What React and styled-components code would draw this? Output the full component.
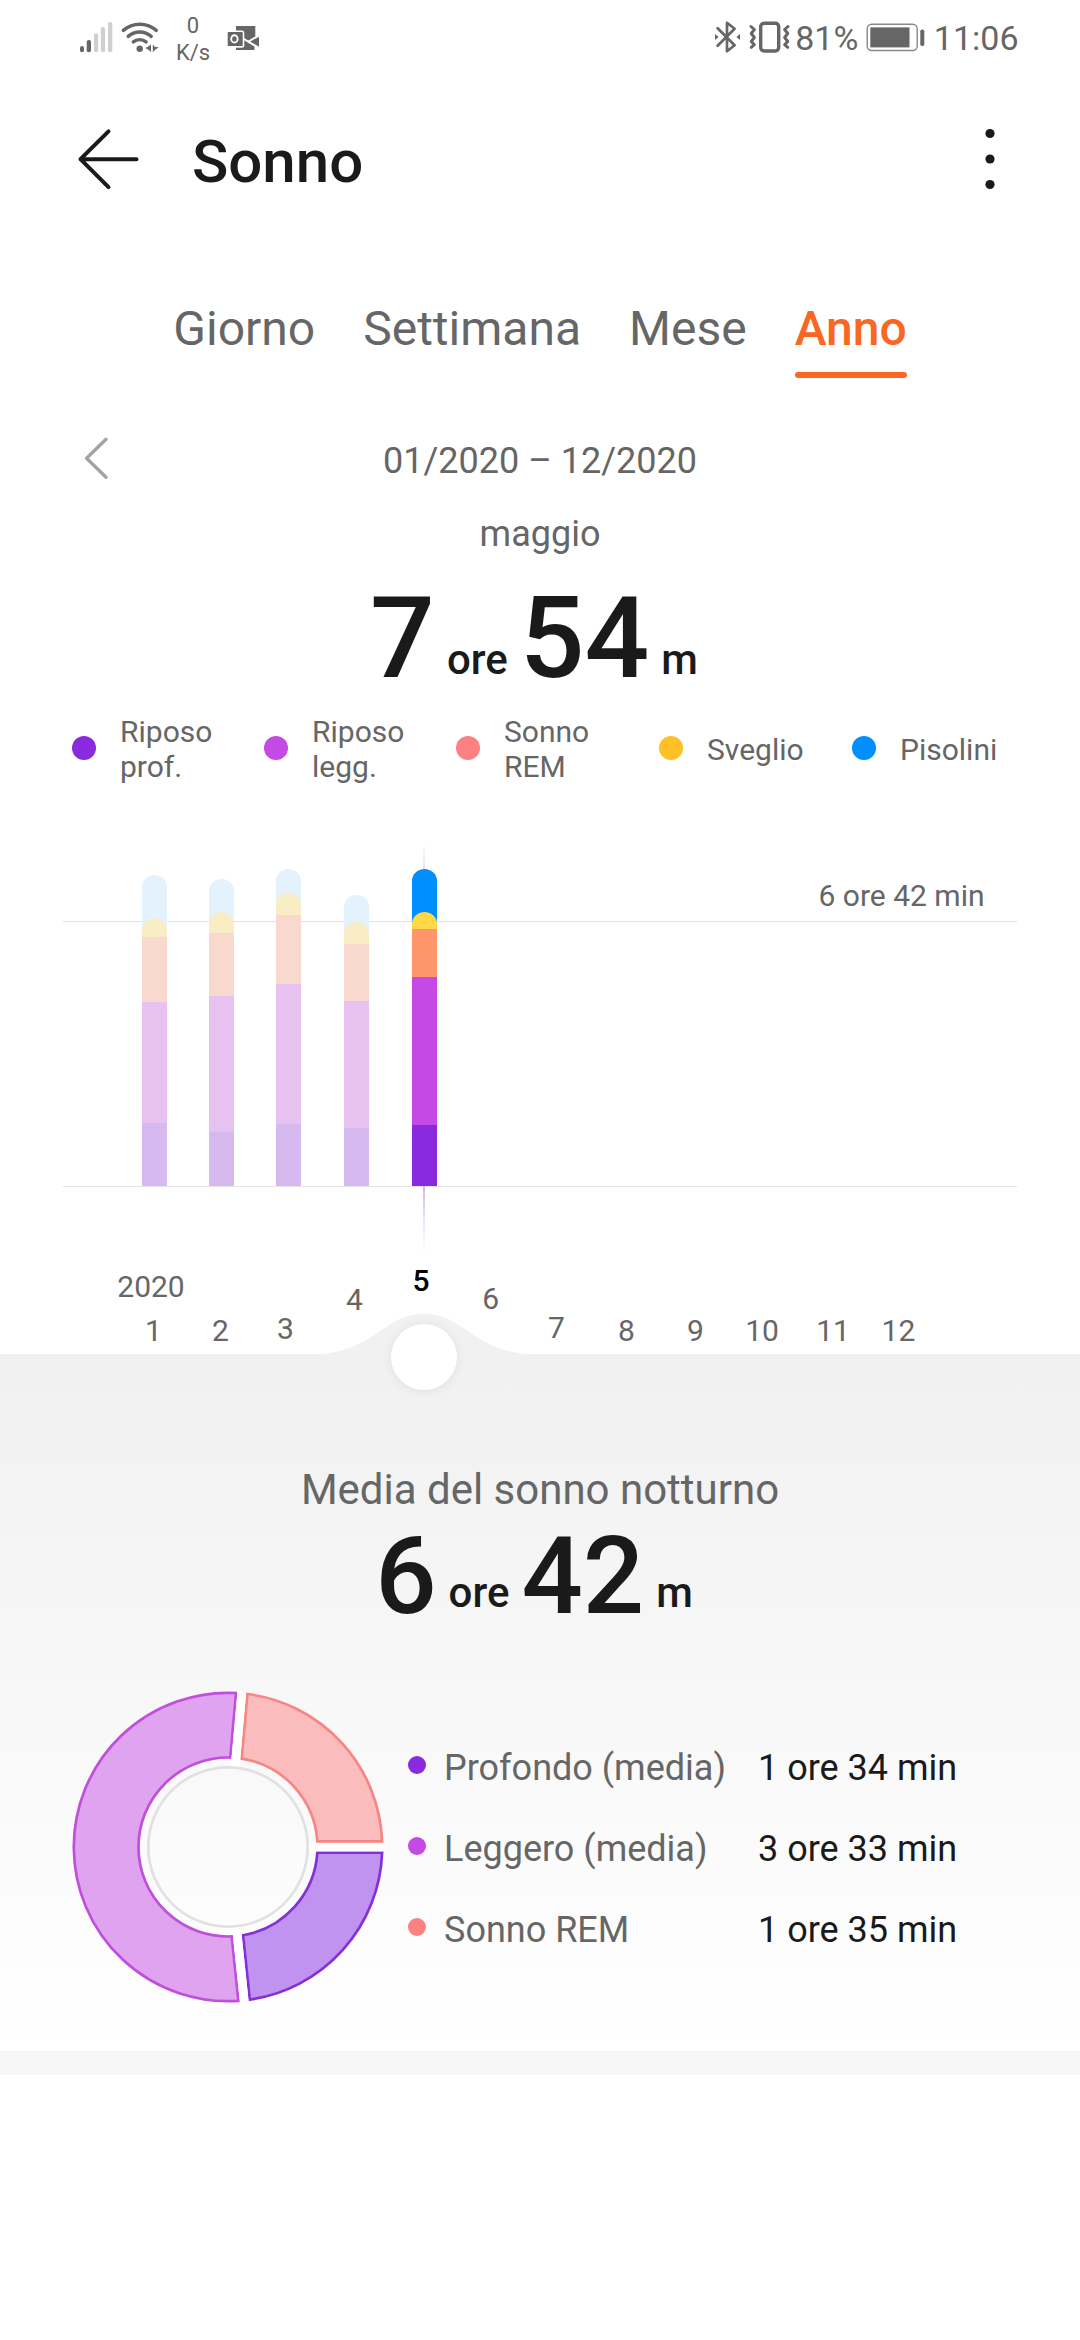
import React from "react";
import styled, { createGlobalStyle } from "styled-components";

const colors = {
  deep: "#892adf",
  light: "#c549e4",
  rem: "#fb8281",
  awake: "#fdc125",
  nap: "#008ffe",
};

const activeBar = {
  nap: "#008ffe",
  awake: "#ffd945",
  rem: "#ff966b",
  light: "#c549e4",
  deep: "#892adf",
};

const fadedBar = {
  nap: "#e4f2fe",
  awake: "#f8edc4",
  rem: "#f9d9cd",
  light: "#e7c2f0",
  deep: "#d5b9ef",
};

const tabs = ["Giorno", "Settimana", "Mese", "Anno"];

const legend = [
  { label: "Riposo prof.", color: colors.deep },
  { label: "Riposo legg.", color: colors.light },
  { label: "Sonno REM", color: colors.rem },
  { label: "Sveglio", color: colors.awake },
  { label: "Pisolini", color: colors.nap },
];

// top edge of every phase, measured up from the base line
const bars = [
  { x: 142, nap: 311, awake: 268, rem: 249, light: 184, deep: 63 },
  { x: 209, nap: 307, awake: 274, rem: 253, light: 190, deep: 54 },
  { x: 276, nap: 317, awake: 293, rem: 271, light: 202, deep: 62 },
  { x: 344, nap: 291, awake: 264, rem: 242, light: 185, deep: 58 },
  { x: 412, nap: 317, awake: 274, rem: 257, light: 209, deep: 61, active: true },
];

const months = [
  { n: 1, x: 153.5, y: 557 },
  { n: 2, x: 220.4, y: 557 },
  { n: 3, x: 285.5, y: 555 },
  { n: 4, x: 354.5, y: 526 },
  { n: 5, x: 421, y: 507, active: true },
  { n: 6, x: 490.6, y: 525 },
  { n: 7, x: 556.5, y: 554 },
  { n: 8, x: 626.4, y: 557 },
  { n: 9, x: 695.4, y: 557 },
  { n: 10, x: 762, y: 557 },
  { n: 11, x: 833, y: 557 },
  { n: 12, x: 898.4, y: 557 },
];

const averages = [
  { label: "Profondo (media)", value: "1 ore 34 min", color: colors.deep },
  { label: "Leggero (media)", value: "3 ore 33 min", color: colors.light },
  { label: "Sonno REM", value: "1 ore 35 min", color: colors.rem },
];

// angles in degrees, clockwise from the right
const slices = [
  { from: 0, to: 84, fill: "#c193f0", stroke: "#8430d8" },
  { from: 84, to: 275.1, fill: "#dfa3f0", stroke: "#c04fdc" },
  { from: 275.1, to: 360, fill: "#fabcbd", stroke: "#f78683" },
];

const BASE = 402;
const BAR = 25;

const capped = (x, y, bottom) =>
  `M${x} ${bottom}V${y + 12}a12.5 12 0 0 1 ${BAR} 0V${bottom}Z`;

const point = (r, angle) => `${r * Math.cos(angle)} ${r * Math.sin(angle)}`;

const slicePath = ({ from, to }) => {
  const outer = 154.2;
  const inner = 89.5;
  const off = 5.7;
  const a = (from * Math.PI) / 180;
  const b = (to * Math.PI) / 180;
  const o = Math.asin(off / outer);
  const i = Math.asin(off / inner);
  const large = to - from > 180 ? 1 : 0;
  return `M${point(outer, a + o)}A${outer} ${outer} 0 ${large} 1 ${point(outer, b - o)}
    L${point(inner, b - i)}A${inner} ${inner} 0 ${large} 0 ${point(inner, a + i)}Z`;
};

const StatusIcons = () => (
  <svg width="92" height="76" viewBox="72 0 92 76" fill="#666">
    <rect x="80" y="46" width="4" height="6.3" rx="2" />
    <rect x="86.7" y="40" width="4.3" height="12.3" rx="2" />
    <g fill="#d0d0d0">
      <rect x="94" y="33.3" width="4.2" height="19" rx="2" />
      <rect x="100.8" y="27" width="4.2" height="25.3" rx="2" />
      <rect x="108" y="22" width="4.3" height="30.3" rx="2" />
    </g>
    <g fill="none" stroke="#666" strokeWidth="3.4" strokeLinecap="round">
      <path d="M123.3 30.4a25 25 0 0 1 33 0" />
      <path d="M128.2 36.4a17.4 17.4 0 0 1 23 0" />
      <path d="M133.3 41.9a10 10 0 0 1 12.8 0" />
    </g>
    <circle cx="139.7" cy="48.7" r="3.2" />
    <path d="M151 44.2v8l-1.8-2-3.9-2.1 3.9-2.1zM152.8 44.2v8l1.8-2 4-3-4-.5z" />
  </svg>
);

const MailIcon = () => (
  <svg width="32" height="24" viewBox="227 25 32 24">
    <path d="M236 25h19.3v13l-1 11H236z" fill="#666" />
    <path d="M244 39.5l15-5.4v12.4z" fill="#666" />
    <path d="M243 37.5l16 9.5M248.5 40.5l10.5-6" stroke="#fff" strokeWidth="2" />
    <rect x="226.9" y="30.3" width="16.6" height="15.6" rx="1.5" fill="#666" stroke="#fff" strokeWidth="1.6" />
    <ellipse cx="234.4" cy="37.9" rx="3.2" ry="3.6" fill="none" stroke="#fff" strokeWidth="1.9" />
  </svg>
);

const PhoneIcons = () => (
  <svg width="76" height="76" viewBox="715 0 76 76" fill="none" stroke="#666">
    <path
      d="M717.6 28.2l17 17-7.6 6V22.8l7.6 6-17 17"
      strokeWidth="2.7"
      strokeLinecap="round"
      strokeLinejoin="round"
    />
    <path d="M715 34l3.6 3-3.6 3zM740 34l-3.6 3 3.6 3z" fill="#666" stroke="none" />
    <rect x="760.7" y="23.2" width="18" height="27.8" rx="3.4" strokeWidth="3.4" />
    <path
      d="M751 26.5l3.3 3-3 4 3 4-3 4 3 3.2-3 2.6M788 26.5l-3.3 3 3 4-3 4 3 4-3 3.2 3 2.6"
      strokeWidth="3"
      strokeLinecap="round"
      strokeLinejoin="round"
    />
  </svg>
);

const BatteryIcon = () => (
  <svg width="59" height="76" viewBox="866.5 0 59 76" fill="#666">
    <rect x="867.7" y="24.3" width="50" height="26.2" rx="4.5" fill="none" stroke="#888" strokeWidth="1.4" />
    <rect x="870.8" y="27.4" width="39.2" height="20" />
    <rect x="920.8" y="29.4" width="4" height="16.6" rx="1.8" />
  </svg>
);

const YearChart = () => (
  <ChartSvg width="1080" height="570" viewBox="0 0 1080 570">
    <defs>
      <linearGradient id="above" x1="0" y1="0" x2="0" y2="1">
        <stop offset="0" stopColor="#e3d9ee" stopOpacity="0" />
        <stop offset="1" stopColor="#e3d9ee" />
      </linearGradient>
      <linearGradient id="below" x1="0" y1="0" x2="0" y2="1">
        <stop offset="0" stopColor="#d1b4ea" />
        <stop offset="1" stopColor="#e3e0f4" stopOpacity="0" />
      </linearGradient>
    </defs>
    <rect x="63" y="137" width="954" height="1" fill="#e4e4e4" />
    <rect x="63" y={BASE} width="954" height="1" fill="#e4e4e4" />
    <rect x="423" y="60" width="2" height="28" fill="url(#above)" />
    <rect x="423" y={BASE} width="2" height="70" fill="url(#below)" />
    {bars.map((b) => {
      const c = b.active ? activeBar : fadedBar;
      return (
        <g key={b.x}>
          <path d={capped(b.x, BASE - b.nap, BASE - b.awake + 10)} fill={c.nap} />
          <path d={capped(b.x, BASE - b.awake, BASE - b.rem)} fill={c.awake} />
          <rect x={b.x} y={BASE - b.rem} width={BAR} height={b.rem - b.light} fill={c.rem} />
          <rect x={b.x} y={BASE - b.light} width={BAR} height={b.light - b.deep} fill={c.light} />
          <rect x={b.x} y={BASE - b.deep} width={BAR} height={b.deep} fill={c.deep} />
        </g>
      );
    })}
    <AxisText x="984.5" y="122" textAnchor="end">
      6 ore 42 min
    </AxisText>
    <AxisText x="151" y="513" textAnchor="middle">
      2020
    </AxisText>
    {months.map((m) => (
      <AxisText key={m.n} x={m.x} y={m.y} textAnchor="middle" $active={m.active}>
        {m.n}
      </AxisText>
    ))}
    <path d="M310 570.5C374 570.5 383 529.7 424 529.7S474 570.5 538 570.5Z" fill="#f1f1f1" />
    <Knob cx="424" cy="573" r="33" />
  </ChartSvg>
);

const Donut = () => (
  <svg width="312" height="312" viewBox="-156 -156 312 312">
    <circle r="79.7" fill="none" stroke="#e1e1e1" strokeWidth="2.7" />
    {slices.map((s) => (
      <g key={s.from}>
        <path d={slicePath(s)} fill={s.fill} stroke={s.stroke} strokeWidth="2.7" />
        <path d="M81 0H155.5" stroke="#fff" strokeWidth="8.8" transform={`rotate(${s.from})`} />
      </g>
    ))}
  </svg>
);

const App = () => {
  return (
    <Screen>
      <GlobalStyle />
      <StatusBar>
        <StatusIcons />
        <Speed>
          <span>0</span>
          <span>K/s</span>
        </Speed>
        <MailIcon />
        <StatusRight>
          <PhoneIcons />
          <StatusText>81%</StatusText>
          <BatteryIcon />
          <StatusText>11:06</StatusText>
        </StatusRight>
      </StatusBar>

      <Header>
        <svg width="64" height="64" viewBox="76 127 64 64" fill="none" stroke="#1a1a1a" strokeWidth="4">
          <path d="M108.5 131.3L80.5 159.2l28 28M80.5 159.2h56" strokeLinecap="round" strokeLinejoin="round" />
        </svg>
        <Title>Sonno</Title>
        <svg width="12" height="64" viewBox="-6 -32 12 64" fill="#1a1a1a">
          <circle cy="-25.5" r="4.6" />
          <circle r="4.6" />
          <circle cy="25.5" r="4.6" />
        </svg>
      </Header>

      <Tabs>
        {tabs.map((tab) => (
          <Tab key={tab} $active={tab === "Anno"}>
            {tab}
          </Tab>
        ))}
      </Tabs>

      <Period>
        <svg width="28" height="46" viewBox="82 435 28 46" fill="none" stroke="#a3a3a3" strokeWidth="3.4">
          <path d="M106 439.3L86.6 458.3l19.4 19" strokeLinecap="round" strokeLinejoin="round" />
        </svg>
        <span>01/2020 – 12/2020</span>
      </Period>
      <Month>maggio</Month>
      <Total $size={114} $top={25} $lift={3}>
        <b>7</b>
        <i>ore</i>
        <b>54</b>
        <i>m</i>
      </Total>

      <Legend>
        {legend.map((item) => (
          <LegendItem key={item.label}>
            <Dot $size={24} $color={item.color} />
            <span>{item.label}</span>
          </LegendItem>
        ))}
      </Legend>

      <YearChart />

      <Panel>
        <Caption>Media del sonno notturno</Caption>
        <Total $size={108} $top={7} $lift={6}>
          <b>6</b>
          <i>ore</i>
          <b>42</b>
          <i>m</i>
        </Total>
        <Summary>
          <Donut />
          <Averages>
            {averages.map((item) => (
              <Average key={item.label}>
                <Dot $size={18} $color={item.color} />
                <span>{item.label}</span>
                <strong>{item.value}</strong>
              </Average>
            ))}
          </Averages>
        </Summary>
      </Panel>
      <Divider />
    </Screen>
  );
};

export default App;

const GlobalStyle = createGlobalStyle`
  * {
    box-sizing: border-box;
  }
  body {
    margin: 0;
    background: #fff;
    font-family: Roboto, "Noto Sans", sans-serif;
    color: #666;
  }
  svg {
    display: block;
    flex-shrink: 0;
  }
`;

const Screen = styled.div`
  width: 1080px;
  height: 2340px;
  overflow: hidden;
  background: #fff;
`;

const StatusBar = styled.div`
  display: flex;
  align-items: center;
  height: 76px;
  padding: 0 61.5px 0 72px;
`;

const Speed = styled.div`
  display: flex;
  flex-direction: column;
  align-items: center;
  width: 58px;
  margin-right: 5px;
  padding-top: 2px;
  font-size: 22px;
  line-height: 27px;
`;

const StatusRight = styled.div`
  display: flex;
  align-items: center;
  margin-left: auto;
`;

const StatusText = styled.span`
  padding-left: 4.5px;
  margin-right: 8px;
  font-size: 34px;
  line-height: 76px;
  &:last-child {
    margin-right: 0;
    padding-left: 8.5px;
  }
`;

const Header = styled.header`
  display: flex;
  align-items: center;
  height: 166px;
  padding: 0 84px 0 76px;
`;

const Title = styled.h1`
  flex: 1;
  margin: 5px 0 0 52px;
  font-size: 60px;
  font-weight: 500;
  line-height: 70px;
  color: #1a1a1a;
`;

const Tabs = styled.nav`
  display: flex;
  justify-content: center;
  gap: 48px;
  height: 136px;
  padding-top: 59px;
`;

const Tab = styled.div`
  font-size: 48px;
  line-height: 56px;
  font-weight: ${(props) => (props.$active ? 500 : 400)};
  color: ${(props) => (props.$active ? "#fa6723" : "#666")};
  &::after {
    content: "";
    display: block;
    height: 6px;
    margin-top: 15px;
    border-radius: 3px;
    background: ${(props) => (props.$active ? "#fa6723" : "none")};
  }
`;

const Period = styled.div`
  display: grid;
  grid-template-columns: 110px 1fr 110px;
  align-items: center;
  height: 60px;
  margin-top: 53px;
  font-size: 36px;
  text-align: center;
  & svg {
    margin: 0 0 7px 82px;
  }
`;

const Month = styled.div`
  margin-top: 21px;
  font-size: 36px;
  line-height: 44px;
  text-align: center;
`;

const Total = styled.div`
  display: flex;
  justify-content: center;
  align-items: baseline;
  height: ${(props) => props.$size}px;
  margin-top: ${(props) => props.$top}px;
  padding-right: 12px;
  font-weight: 500;
  color: #1a1a1a;
  & b {
    font-size: ${(props) => props.$size}px;
    font-weight: 500;
    line-height: 1;
  }
  & i {
    margin: 0 12px;
    font-size: 42px;
    font-style: normal;
    line-height: 1;
    transform: translateY(-${(props) => props.$lift}px);
  }
  & i:last-child {
    margin-right: 0;
  }
`;

const Legend = styled.div`
  display: grid;
  grid-template-columns: 192px 192px 203px 193px auto;
  align-items: center;
  height: 70px;
  margin-top: 19px;
  padding-left: 72px;
  font-size: 30px;
  line-height: 35px;
`;

const LegendItem = styled.div`
  display: flex;
  align-items: center;
  & span {
    width: min-content;
    margin-left: 24px;
  }
`;

const Dot = styled.div`
  flex-shrink: 0;
  width: ${(props) => props.$size}px;
  height: ${(props) => props.$size}px;
  border-radius: 50%;
  background: ${(props) => props.$color};
  margin-bottom: 2px;
`;

const ChartSvg = styled.svg`
  position: relative;
  z-index: 1;
  overflow: visible;
`;

const AxisText = styled.text`
  font-size: 30px;
  font-weight: ${(props) => (props.$active ? 500 : 400)};
  fill: ${(props) => (props.$active ? "#000" : "#666")};
`;

const Knob = styled.circle`
  fill: #fff;
  filter: drop-shadow(0 1px 5px rgba(0, 0, 0, 0.07));
`;

const Panel = styled.section`
  height: 697px;
  padding-top: 111px;
  background: linear-gradient(#f0f0f0 -31px, #fff 100%);
`;

const Caption = styled.div`
  font-size: 42px;
  line-height: 50px;
  text-align: center;
`;

const Summary = styled.div`
  display: flex;
  margin-top: 61px;
  padding-left: 71.5px;
`;

const Averages = styled.div`
  margin: 36px 0 0 24.5px;
`;

const Average = styled.div`
  display: grid;
  grid-template-columns: 36px 314px auto;
  align-items: center;
  height: 81px;
  font-size: 36px;
  line-height: 42px;
  & div {
    margin-bottom: 5px;
  }
  & strong {
    font-weight: 400;
    color: #1a1a1a;
  }
`;

const Divider = styled.div`
  height: 24px;
  background: #f7f7f7;
`;
